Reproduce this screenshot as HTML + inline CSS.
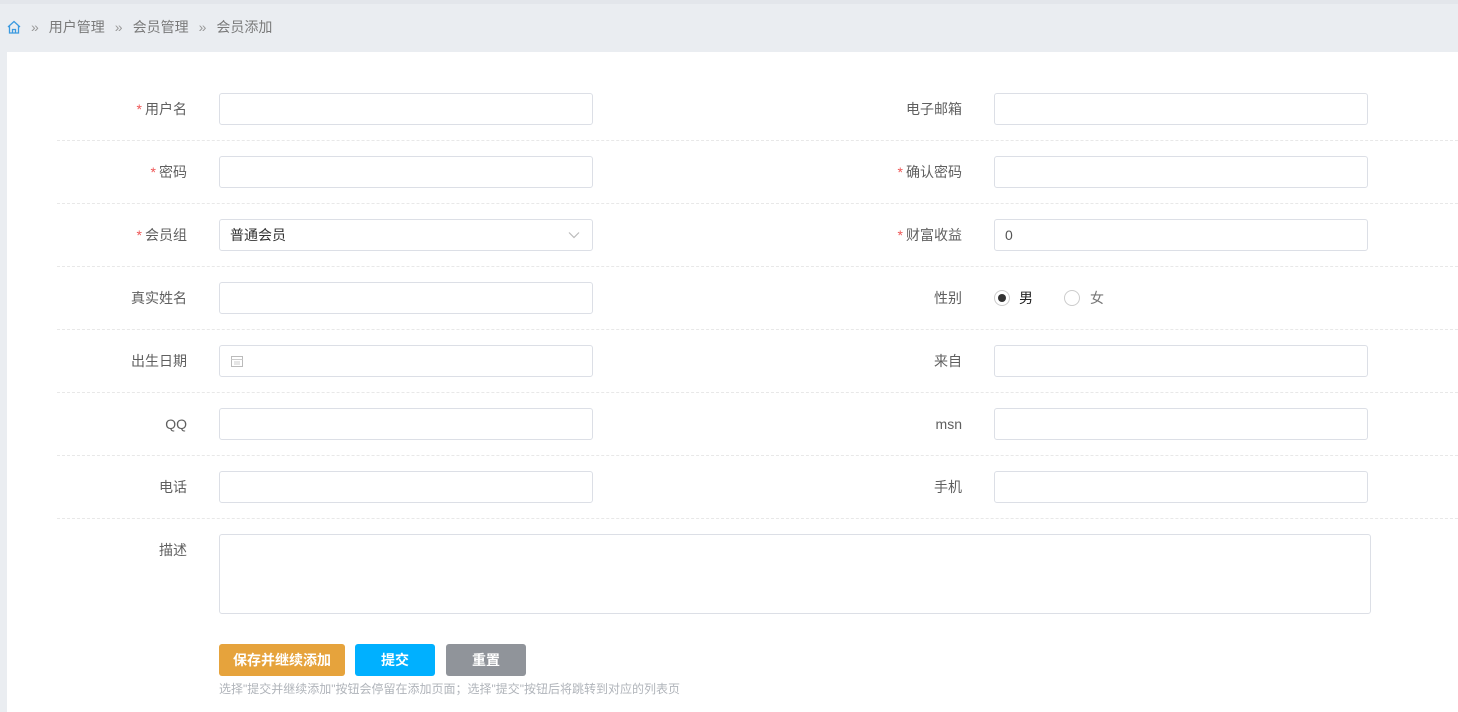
<!DOCTYPE html>
<html><head><meta charset="utf-8"><style>
*{box-sizing:border-box;margin:0;padding:0}
body{width:1458px;height:705px;background:#eaedf1;font-family:"Liberation Sans","Noto Sans CJK SC",sans-serif;font-size:14px;color:#595959;position:relative;overflow:hidden}
.top{position:absolute;left:0;top:0;width:1458px;height:4px;background:#e3e6eb}
.bc{position:absolute;left:7px;top:17px;font-size:14px;color:#7a7a7a;display:flex;align-items:center}
.bc .s{color:#999;margin:0 10px 0 10px;font-size:14px}
.panel{position:absolute;left:7px;top:52px;width:1451px;height:660px;background:#fff}
.lbl{position:absolute;width:200px;text-align:right;font-size:14px;color:#5f5f5f;line-height:32px}
.lbl i{font-style:normal;color:#e55;margin-right:3px}
.in{position:absolute;height:32px;border:1px solid #dcdfe6;border-radius:3px;background:#fff;font-size:14px;color:#555;line-height:30px;padding-left:10px}
.sep{position:absolute;left:57px;width:1401px;border-top:1px dashed #e8e8e8}
.btn{position:absolute;top:644px;height:32px;border-radius:3px;color:#fff;font-size:14px;text-align:center;line-height:32px;font-weight:bold}
</style></head><body>
<div class="top"></div>
<div class="bc"><svg width="14" height="14" viewBox="0 0 14 14"><path d="M1 7L7 1.5L13 7M2.5 5.8V13H11.5V5.8M5.5 13V9.5H8.5V13" fill="none" stroke="#3b9ae0" stroke-width="1.3"/></svg><span class="s">»</span>用户管理<span class="s">»</span>会员管理<span class="s">»</span>会员添加</div>
<div class="panel"></div>

<div class="lbl" style="left:-13px;top:93px"><i>*</i>用户名</div>
<div class="in" style="left:219px;top:93px;width:374px"></div>
<div class="lbl" style="left:762px;top:93px">电子邮箱</div>
<div class="in" style="left:994px;top:93px;width:374px"></div>
<div class="sep" style="top:140px"></div>

<div class="lbl" style="left:-13px;top:156px"><i>*</i>密码</div>
<div class="in" style="left:219px;top:156px;width:374px"></div>
<div class="lbl" style="left:762px;top:156px"><i>*</i>确认密码</div>
<div class="in" style="left:994px;top:156px;width:374px"></div>
<div class="sep" style="top:203px"></div>

<div class="lbl" style="left:-13px;top:219px"><i>*</i>会员组</div>
<div class="in" style="left:219px;top:219px;width:374px;color:#333">普通会员<svg style="position:absolute;right:12px;top:11px" width="12" height="8" viewBox="0 0 12 8"><path d="M1 1.5L6 6.5L11 1.5" fill="none" stroke="#bbb" stroke-width="1.2"/></svg></div>
<div class="lbl" style="left:762px;top:219px"><i>*</i>财富收益</div>
<div class="in" style="left:994px;top:219px;width:374px">0</div>
<div class="sep" style="top:266px"></div>

<div class="lbl" style="left:-13px;top:282px">真实姓名</div>
<div class="in" style="left:219px;top:282px;width:374px"></div>
<div class="lbl" style="left:762px;top:282px">性别</div>
<div style="position:absolute;left:994px;top:290px;width:16px;height:16px;border:1px solid #ccc;border-radius:50%"><div style="position:absolute;left:3px;top:3px;width:8px;height:8px;border-radius:50%;background:#333"></div></div>
<div style="position:absolute;left:1019px;top:289px;color:#222;line-height:18px">男</div>
<div style="position:absolute;left:1064px;top:290px;width:16px;height:16px;border:1px solid #ccc;border-radius:50%"></div>
<div style="position:absolute;left:1090px;top:289px;color:#777;line-height:18px">女</div>
<div class="sep" style="top:329px"></div>

<div class="lbl" style="left:-13px;top:345px">出生日期</div>
<div class="in" style="left:219px;top:345px;width:374px"><svg style="position:absolute;left:11px;top:9px" width="12" height="12" viewBox="0 0 12 12"><rect x="0.5" y="1.5" width="11" height="10" fill="none" stroke="#bbb"/><path d="M0.5 4.5H11.5M3 7H9M3 9H9" stroke="#ccc"/></svg></div>
<div class="lbl" style="left:762px;top:345px">来自</div>
<div class="in" style="left:994px;top:345px;width:374px"></div>
<div class="sep" style="top:392px"></div>

<div class="lbl" style="left:-13px;top:408px">QQ</div>
<div class="in" style="left:219px;top:408px;width:374px"></div>
<div class="lbl" style="left:762px;top:408px">msn</div>
<div class="in" style="left:994px;top:408px;width:374px"></div>
<div class="sep" style="top:455px"></div>

<div class="lbl" style="left:-13px;top:471px">电话</div>
<div class="in" style="left:219px;top:471px;width:374px"></div>
<div class="lbl" style="left:762px;top:471px">手机</div>
<div class="in" style="left:994px;top:471px;width:374px"></div>
<div class="sep" style="top:518px"></div>

<div class="lbl" style="left:-13px;top:534px;line-height:32px">描述</div>
<div class="in" style="left:219px;top:534px;width:1152px;height:80px"></div>

<div class="btn" style="left:219px;width:126px;background:#e6a33c">保存并继续添加</div>
<div class="btn" style="left:355px;width:80px;background:#00b0ff">提交</div>
<div class="btn" style="left:446px;width:80px;background:#90949a">重置</div>
<div style="position:absolute;left:219px;top:680px;font-size:12px;color:#b0b4ba">选择"提交并继续添加"按钮会停留在添加页面；选择"提交"按钮后将跳转到对应的列表页</div>
</body></html>
